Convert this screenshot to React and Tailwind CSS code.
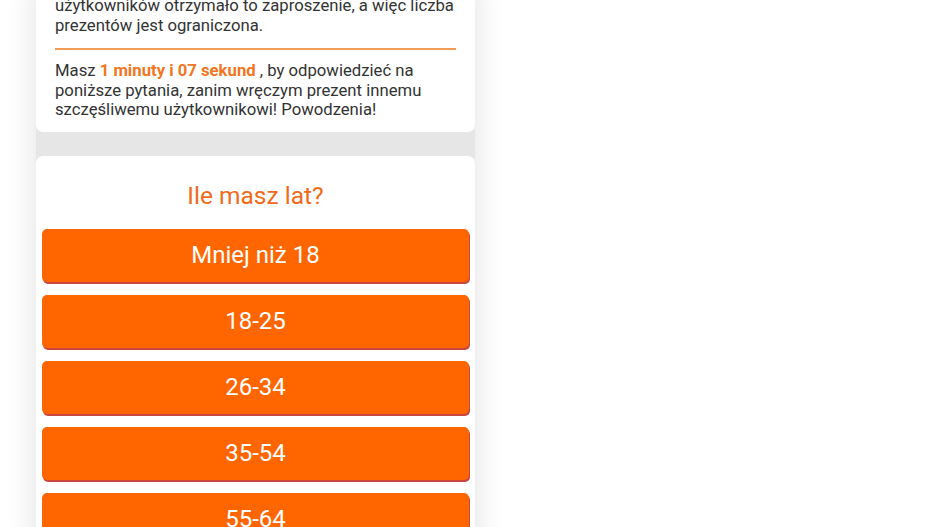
import React from "react";

const answers = ["Mniej niż 18", "18-25", "26-34", "35-54", "55-64"];

const App = () => {
  return (
    <div
      className="w-[936px] h-[527px] overflow-hidden bg-white"
      style={{ fontFamily: "Roboto, 'Noto Sans', sans-serif" }}
    >
      <div className="ml-[36px] w-[439px] bg-[#e6e6e6] shadow-[0_0_30px_rgba(0,0,0,0.12)] -mt-[22px] pb-[40px]">

        {/* INTRO CARD */}
        <div className="bg-white rounded-b-[7px] pl-[19px] pr-[14px] pt-[18px] pb-[12px] text-[16.7px] leading-[19.5px] text-[#333333]">
          <p>
            użytkowników otrzymało to zaproszenie, a więc liczba prezentów jest ograniczona.
          </p>

          <div className="h-[2px] bg-[#f39a55] mt-[13px] mb-[11px] mr-[5px]" />

          <p className="pr-[5px]">
            Masz{" "}
            <span className="font-bold text-[#f2761f]">1 minuty i 07 sekund</span>
            {" "}, by odpowiedzieć na poniższe pytania, zanim wręczym prezent innemu szczęśliwemu użytkownikowi! Powodzenia!
          </p>
        </div>

        {/* QUESTION CARD */}
        <div className="bg-white rounded-[7px] mt-[24px] px-[6px] pt-[24px] pb-[20px]">
          <h2 className="text-center text-[24.5px] leading-[32px] text-[#f06a1a] mb-[17px]">
            Ile masz lat?
          </h2>

          <div className="flex flex-col gap-[13px]">
            {answers.map((a) => (
              <button
                key={a}
                className="w-full h-[53px] rounded-[5px] bg-[#ff6600] text-white text-[24px] shadow-[1px_2px_0_#c9463f]"
              >
                {a}
              </button>
            ))}
          </div>
        </div>

      </div>
    </div>
  );
};

export default App;
